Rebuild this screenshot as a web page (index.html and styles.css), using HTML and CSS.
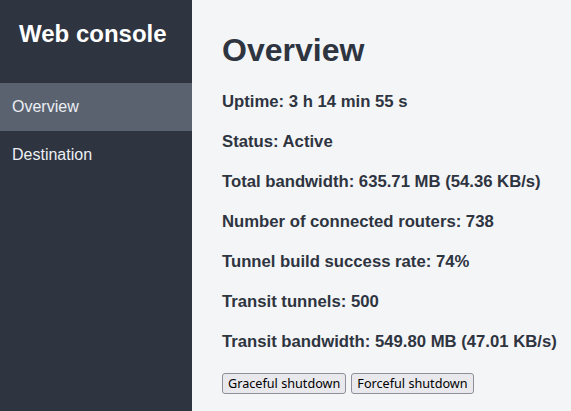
FILE: index.html
```html
<!DOCTYPE html>
<html>
<head>
<meta charset="utf-8">
<link rel="stylesheet" href="styles.css">
</head>
<body>
<div class="layout">
  <nav class="sidebar">
    <div class="brand">Web console</div>
    <ul class="menu">
      <li class="item active">Overview</li>
      <li class="item">Destination</li>
    </ul>
  </nav>
  <main class="content">
    <h1 class="title">Overview</h1>
    <p class="stat">Uptime: 3 h 14 min 55 s</p>
    <p class="stat">Status: Active</p>
    <p class="stat">Total bandwidth: 635.71 MB (54.36 KB/s)</p>
    <p class="stat">Number of connected routers: 738</p>
    <p class="stat">Tunnel build success rate: 74%</p>
    <p class="stat">Transit tunnels: 500</p>
    <p class="stat">Transit bandwidth: 549.80 MB (47.01 KB/s)</p>
    <div class="actions">
      <button class="btn">Graceful shutdown</button>
      <button class="btn">Forceful shutdown</button>
    </div>
  </main>
</div>
</body>
</html>
```
FILE: styles.css
```css
html, body {
  margin: 0;
  padding: 0;
  height: 100%;
}
body {
  font-family: "Liberation Sans", Arial, sans-serif;
  background: #f4f5f7;
  color: #2e3440;
}
.layout {
  display: flex;
  min-height: 100%;
}
.sidebar {
  width: 192px;
  flex: none;
  background: #2e3440;
  color: #eceff4;
}
.brand {
  font-size: 24px;
  font-weight: bold;
  color: #ffffff;
  padding: 20px 0 0 19px;
  height: 63px;
  box-sizing: content-box;
  line-height: 28px;
}
.menu {
  list-style: none;
  margin: 0;
  padding: 0;
}
.item {
  height: 48px;
  line-height: 48px;
  padding-left: 12px;
  font-size: 16px;
  color: #eceff4;
}
.item.active {
  background: #5a6270;
}
.content {
  flex: 1;
  padding: 0 8px 0 30px;
  white-space: nowrap;
}
.title {
  font-size: 32px;
  font-weight: bold;
  margin: 30px 0 0;
  line-height: 40px;
}
.stat {
  font-size: 16.7px;
  font-weight: bold;
  margin: 0;
  line-height: 18px;
  margin-top: 22px;
}
.title + .stat {
  margin-top: 23px;
}
.actions {
  margin-top: 22px;
  display: flex;
  gap: 5px;
}
.btn {
  font-family: "Noto Sans", sans-serif;
  font-size: 12.65px;
  line-height: 17px;
  padding: 1px 5px;
  border: 1px solid #8f8f9d;
  border-radius: 3px;
  background: #e9e9ed;
  color: #000;
}
```
